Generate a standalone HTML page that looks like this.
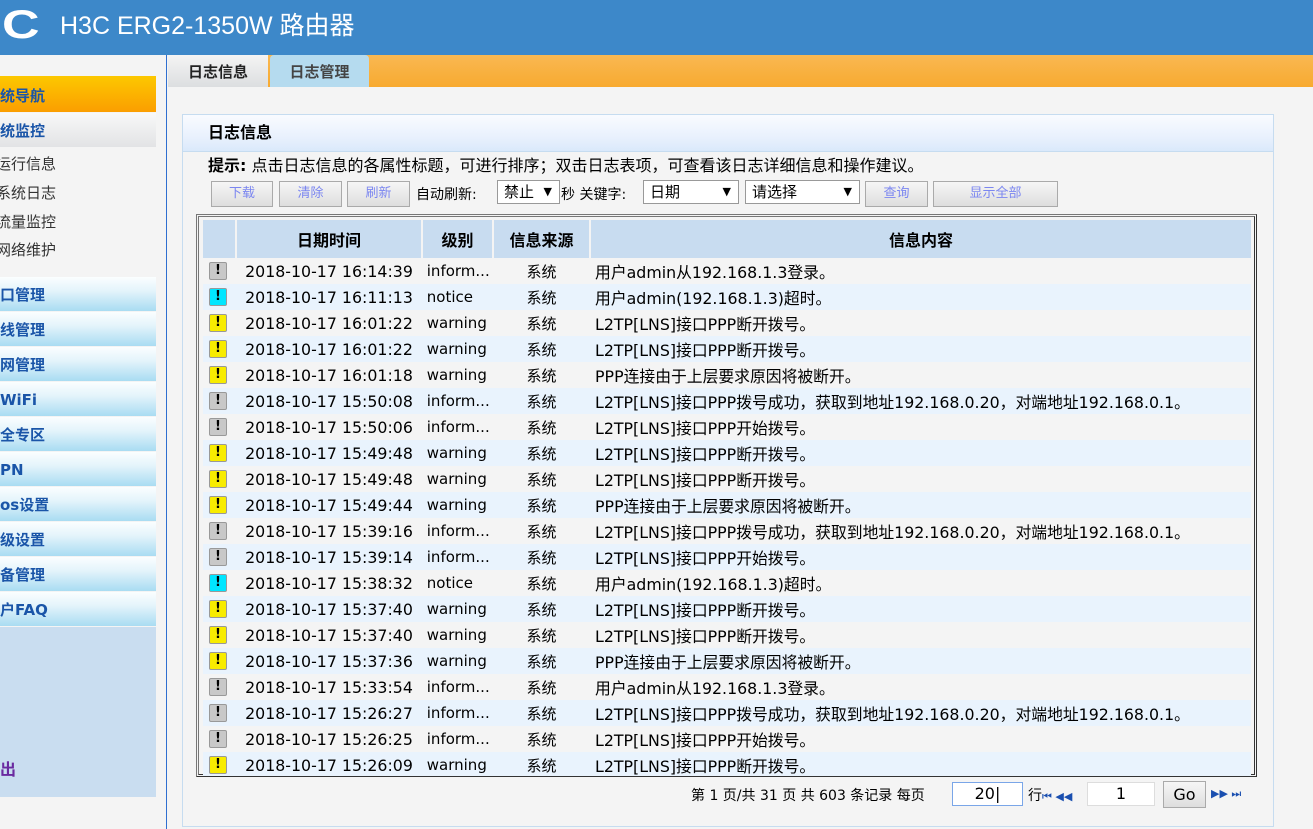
<!DOCTYPE html><html><head><meta charset="utf-8"><style>
*{margin:0;padding:0;box-sizing:border-box}
body{width:1313px;height:829px;overflow:hidden;background:#f4f4f4;font-family:"DejaVu Sans","Noto Sans CJK SC",sans-serif;position:relative;font-size:14px;color:#000}
.a{position:absolute}
.hdr{left:0;top:0;width:1313px;height:55px;background:#3d88c9}
.side{left:0;top:55px;width:167px;height:774px;background:#f4f4f4;border-right:1px solid #2f6fd0}
.nav{left:0;width:156px;height:34px;font-weight:bold;color:#1a55a8;font-size:15px;line-height:36px;overflow:hidden;white-space:nowrap;background:linear-gradient(#fbfeff,#e4f4fb 40%,#a9dcf2)}
.sub{left:0;font-size:15px;color:#333;white-space:nowrap}
.btn{top:181px;height:26px;border:1px solid #aaa;background:linear-gradient(#f6f6f6,#dedede);color:#7b86f0;font-size:13px;text-align:center;line-height:24px}
.sel{height:24px;border:1px solid #999;background:#fff;font-size:15px;line-height:22px;padding-left:6px}
.sel b{position:absolute;right:7px;top:0;font-size:11px}
table{border-collapse:collapse;position:absolute;left:203px;top:220px;width:1048px;table-layout:fixed}
th{background:#c8dcf0;height:38px;font-size:16px;border-right:2px solid #f4f4f4;font-weight:bold}
td{height:26px;font-size:15px;white-space:nowrap;overflow:hidden}
td:nth-child(2){font-size:15.8px}
td:nth-child(5){font-size:15.8px}
tr:nth-child(even) td{background:#e9f3fd}
td.c{text-align:center}
.ic{display:inline-block;width:18px;height:18px;border:1px solid #999;border-radius:2px;font-weight:bold;font-size:13px;line-height:16px;text-align:center;vertical-align:middle;margin-left:6px}
.g{background:#c8c8c8}.y{background:#f8ec00}.cy{background:#00e6ff}
</style></head><body>
<div class="a hdr"></div>
<div class="a" style="left:2px;top:3px;color:#fff;font-size:40px;font-weight:bold;line-height:44px;font-family:'Liberation Sans';transform:scaleX(1.3);transform-origin:left">C</div>
<div class="a" style="left:60px;top:9px;color:#fff;font-size:25px;line-height:34px;font-family:'Liberation Sans','Noto Sans CJK SC',sans-serif">H3C ERG2-1350W 路由器</div>
<div class="a side"></div>
<div class="a" style="left:0;top:76px;width:156px;height:36px;background:linear-gradient(#fcc800,#fb9e00);font-weight:bold;font-size:15px;line-height:40px;color:#1a55a8">统导航</div>
<div class="a" style="left:0;top:113px;width:156px;height:34px;background:linear-gradient(#f8f8f8,#e2e3e5);font-weight:bold;font-size:15px;line-height:36px;color:#1a55a8">统监控</div>
<div class="a sub" style="top:153px;left:-4px">运行信息</div>
<div class="a sub" style="top:182px;left:-4px">系统日志</div>
<div class="a sub" style="top:211px;left:-4px">流量监控</div>
<div class="a sub" style="top:239px;left:-4px">网络维护</div>
<div class="a nav" style="top:277px">口管理</div>
<div class="a nav" style="top:312px">线管理</div>
<div class="a nav" style="top:347px">网管理</div>
<div class="a nav" style="top:382px">WiFi</div>
<div class="a nav" style="top:417px">全专区</div>
<div class="a nav" style="top:452px">PN</div>
<div class="a nav" style="top:487px">os设置</div>
<div class="a nav" style="top:522px">级设置</div>
<div class="a nav" style="top:557px">备管理</div>
<div class="a nav" style="top:592px">户FAQ</div>
<div class="a" style="left:0;top:627px;width:156px;height:170px;background:#c9ddf0"></div>
<div class="a" style="left:0;top:756px;font-weight:bold;font-size:16px;color:#6a2aa0">出</div>
<div class="a" style="left:168px;top:55px;width:1145px;height:32px;background:linear-gradient(#f9b852,#f8aa30)"></div>
<div class="a" style="left:168px;top:55px;width:100px;height:32px;background:linear-gradient(#f4f4f4,#dcdee0);font-weight:bold;font-size:15px;text-align:center;line-height:34px;color:#222">日志信息</div>
<div class="a" style="left:270px;top:55px;width:99px;height:32px;background:#b5dbef;border-radius:4px 4px 0 0;font-weight:bold;font-size:15px;text-align:center;line-height:34px;color:#444">日志管理</div>
<div class="a" style="left:182px;top:114px;width:1092px;height:713px;border:1px solid #c6dcf0"></div>
<div class="a" style="left:183px;top:115px;width:1090px;height:37px;background:linear-gradient(#f9fbff,#e9f1fd 60%,#dae9fb);border-bottom:1px solid #c6dcf0;font-weight:bold;font-size:16px;line-height:36px;padding-left:25px">日志信息</div>
<div class="a" style="left:208px;top:156px;font-size:16px;line-height:20px;white-space:nowrap"><b>提示:</b> 点击日志信息的各属性标题，可进行排序；双击日志表项，可查看该日志详细信息和操作建议。</div>
<div class="a btn" style="left:211px;width:62px">下载</div>
<div class="a btn" style="left:279px;width:63px">清除</div>
<div class="a btn" style="left:347px;width:63px">刷新</div>
<div class="a" style="left:416px;top:184px;font-size:14px">自动刷新:</div>
<div class="a sel" style="left:497px;top:180px;width:63px">禁止<b>▼</b></div>
<div class="a" style="left:561px;top:184px;font-size:14px">秒 关键字:</div>
<div class="a sel" style="left:643px;top:180px;width:96px">日期<b>▼</b></div>
<div class="a sel" style="left:745px;top:180px;width:115px">请选择<b>▼</b></div>
<div class="a btn" style="left:865px;width:63px">查询</div>
<div class="a btn" style="left:933px;width:125px">显示全部</div>
<div class="a" style="left:196px;top:214px;width:1061px;height:563px;border-style:double;border-width:3px;border-color:#777 #333 #333 #777"></div>
<table>
<colgroup><col style="width:33px"><col style="width:186px"><col style="width:71px"><col style="width:97px"><col></colgroup>
<tr><th></th><th>日期时间</th><th>级别</th><th>信息来源</th><th style="border:0">信息内容</th></tr>
</table>
<div class="a" style="left:203px;top:258px;width:1048px;height:518px;overflow:hidden">
<table style="left:0;top:0">
<colgroup><col style="width:33px"><col style="width:186px"><col style="width:71px"><col style="width:97px"><col></colgroup>
<tr><td><span class="ic g">!</span></td><td class="c">2018-10-17 16:14:39</td><td>&nbsp;inform...</td><td class="c">系统</td><td>&nbsp;用户admin从192.168.1.3登录。</td></tr>
<tr><td><span class="ic cy">!</span></td><td class="c">2018-10-17 16:11:13</td><td>&nbsp;notice</td><td class="c">系统</td><td>&nbsp;用户admin(192.168.1.3)超时。</td></tr>
<tr><td><span class="ic y">!</span></td><td class="c">2018-10-17 16:01:22</td><td>&nbsp;warning</td><td class="c">系统</td><td>&nbsp;L2TP[LNS]接口PPP断开拨号。</td></tr>
<tr><td><span class="ic y">!</span></td><td class="c">2018-10-17 16:01:22</td><td>&nbsp;warning</td><td class="c">系统</td><td>&nbsp;L2TP[LNS]接口PPP断开拨号。</td></tr>
<tr><td><span class="ic y">!</span></td><td class="c">2018-10-17 16:01:18</td><td>&nbsp;warning</td><td class="c">系统</td><td>&nbsp;PPP连接由于上层要求原因将被断开。</td></tr>
<tr><td><span class="ic g">!</span></td><td class="c">2018-10-17 15:50:08</td><td>&nbsp;inform...</td><td class="c">系统</td><td>&nbsp;L2TP[LNS]接口PPP拨号成功，获取到地址192.168.0.20，对端地址192.168.0.1。</td></tr>
<tr><td><span class="ic g">!</span></td><td class="c">2018-10-17 15:50:06</td><td>&nbsp;inform...</td><td class="c">系统</td><td>&nbsp;L2TP[LNS]接口PPP开始拨号。</td></tr>
<tr><td><span class="ic y">!</span></td><td class="c">2018-10-17 15:49:48</td><td>&nbsp;warning</td><td class="c">系统</td><td>&nbsp;L2TP[LNS]接口PPP断开拨号。</td></tr>
<tr><td><span class="ic y">!</span></td><td class="c">2018-10-17 15:49:48</td><td>&nbsp;warning</td><td class="c">系统</td><td>&nbsp;L2TP[LNS]接口PPP断开拨号。</td></tr>
<tr><td><span class="ic y">!</span></td><td class="c">2018-10-17 15:49:44</td><td>&nbsp;warning</td><td class="c">系统</td><td>&nbsp;PPP连接由于上层要求原因将被断开。</td></tr>
<tr><td><span class="ic g">!</span></td><td class="c">2018-10-17 15:39:16</td><td>&nbsp;inform...</td><td class="c">系统</td><td>&nbsp;L2TP[LNS]接口PPP拨号成功，获取到地址192.168.0.20，对端地址192.168.0.1。</td></tr>
<tr><td><span class="ic g">!</span></td><td class="c">2018-10-17 15:39:14</td><td>&nbsp;inform...</td><td class="c">系统</td><td>&nbsp;L2TP[LNS]接口PPP开始拨号。</td></tr>
<tr><td><span class="ic cy">!</span></td><td class="c">2018-10-17 15:38:32</td><td>&nbsp;notice</td><td class="c">系统</td><td>&nbsp;用户admin(192.168.1.3)超时。</td></tr>
<tr><td><span class="ic y">!</span></td><td class="c">2018-10-17 15:37:40</td><td>&nbsp;warning</td><td class="c">系统</td><td>&nbsp;L2TP[LNS]接口PPP断开拨号。</td></tr>
<tr><td><span class="ic y">!</span></td><td class="c">2018-10-17 15:37:40</td><td>&nbsp;warning</td><td class="c">系统</td><td>&nbsp;L2TP[LNS]接口PPP断开拨号。</td></tr>
<tr><td><span class="ic y">!</span></td><td class="c">2018-10-17 15:37:36</td><td>&nbsp;warning</td><td class="c">系统</td><td>&nbsp;PPP连接由于上层要求原因将被断开。</td></tr>
<tr><td><span class="ic g">!</span></td><td class="c">2018-10-17 15:33:54</td><td>&nbsp;inform...</td><td class="c">系统</td><td>&nbsp;用户admin从192.168.1.3登录。</td></tr>
<tr><td><span class="ic g">!</span></td><td class="c">2018-10-17 15:26:27</td><td>&nbsp;inform...</td><td class="c">系统</td><td>&nbsp;L2TP[LNS]接口PPP拨号成功，获取到地址192.168.0.20，对端地址192.168.0.1。</td></tr>
<tr><td><span class="ic g">!</span></td><td class="c">2018-10-17 15:26:25</td><td>&nbsp;inform...</td><td class="c">系统</td><td>&nbsp;L2TP[LNS]接口PPP开始拨号。</td></tr>
<tr><td><span class="ic y">!</span></td><td class="c">2018-10-17 15:26:09</td><td>&nbsp;warning</td><td class="c">系统</td><td>&nbsp;L2TP[LNS]接口PPP断开拨号。</td></tr>
</table></div>
<div class="a" style="left:691px;top:785px;font-size:14px;white-space:nowrap">第 1 页/共 31 页 共 603 条记录 每页</div>
<div class="a" style="left:952px;top:782px;width:71px;height:24px;border:1px solid #7aa6e8;background:#fff;text-align:center;font-size:16px;line-height:22px">20|</div>
<div class="a" style="left:1028px;top:785px;font-size:14px">行<span style="color:#1a4fb0;font-size:11px">⏮ ◀◀</span></div>
<div class="a" style="left:1087px;top:782px;width:68px;height:24px;border:1px solid #ddd;background:#fff;text-align:center;font-size:16px;line-height:22px">1</div>
<div class="a" style="left:1163px;top:781px;width:43px;height:27px;border:1px solid #aaa;background:linear-gradient(#f6f6f6,#dedede);text-align:center;font-size:16px;line-height:25px">Go</div>
<div class="a" style="left:1211px;top:787px;color:#1a4fb0;font-size:11px">▶▶ ⏭</div>
</body></html>
